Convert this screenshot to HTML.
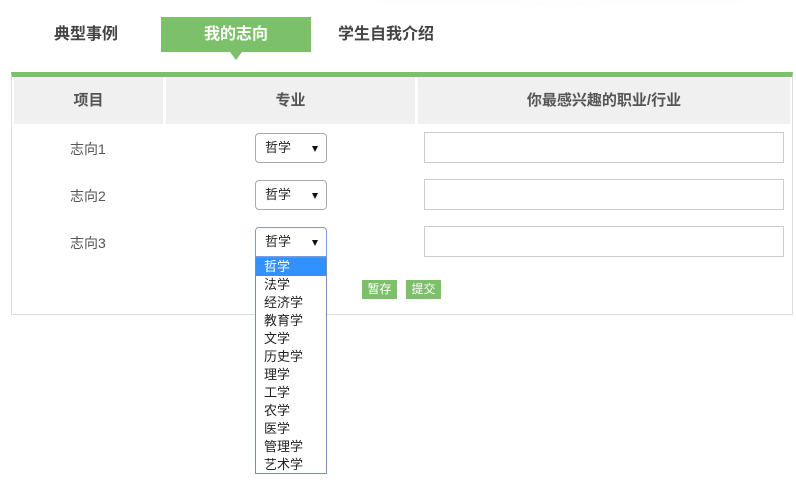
<!DOCTYPE html>
<html><head><meta charset="utf-8"><style>
*{margin:0;padding:0;box-sizing:border-box}
body{width:796px;height:490px;background:#fff;position:relative;overflow:hidden;font-family:"Liberation Sans","Noto Sans CJK SC",sans-serif;color:#555}
.a{position:absolute}
.tab{font-size:16px;font-weight:bold;color:#444;top:24px;line-height:22px}
.hd{top:77px;height:47px;background:#f0f0f0;font-size:15px;font-weight:bold;color:#555;text-align:center;line-height:47px}
.lbl{left:70px;font-size:14px;color:#555}
.sel{left:255px;width:72px;height:30px;border:1px solid #aaa;border-radius:4px;font-size:13px;color:#222;padding-left:9px;line-height:28px;background:#fff}
.sel:after{content:"";position:absolute;right:8px;top:12px;border-left:3.5px solid transparent;border-right:3.5px solid transparent;border-top:6px solid #111}
.inp{left:424px;width:360px;height:31px;border:1px solid #ccc}
.btn{top:280px;height:19px;width:35px;background:#7dc06a;color:#fff;font-size:12px;text-align:center;line-height:19px}
.dd{left:255px;top:257px;width:72px;height:217px;border:1px solid #7a8db5;background:#fff;font-size:13px;color:#222}
.dd div{height:18px;line-height:18px;padding-left:8px}
</style></head><body>
<div class="a" style="left:300px;top:-30px;width:520px;height:34px;border-radius:50%;background:radial-gradient(ellipse at center,#fff 60%,#e4e6ea 90%,#fff 100%);filter:blur(2px)"></div>
<div class="a tab" style="left:54px">典型事例</div>
<div class="a" style="left:161px;top:17px;width:150px;height:35px;background:#7dc06a"></div>
<div class="a" style="left:230px;top:52px;border-left:6px solid transparent;border-right:6px solid transparent;border-top:8px solid #7dc06a"></div>
<div class="a tab" style="left:204px;color:#fff">我的志向</div>
<div class="a tab" style="left:338px">学生自我介绍</div>
<div class="a" style="left:11px;top:72px;width:782px;height:243px;border:1px solid #ddd;border-top:5px solid #7dc06a"></div>
<div class="a hd" style="left:14px;width:149px">项目</div>
<div class="a hd" style="left:166px;width:249px">专业</div>
<div class="a hd" style="left:418px;width:372px">你最感兴趣的职业/行业</div>
<div class="a lbl" style="top:139px">志向1</div>
<div class="a lbl" style="top:186px">志向2</div>
<div class="a lbl" style="top:233px">志向3</div>
<div class="a sel" style="top:133px">哲学</div>
<div class="a sel" style="top:180px">哲学</div>
<div class="a sel" style="top:227px;border-color:#7a9be0;border-radius:4px 4px 0 0">哲学</div>
<div class="a inp" style="top:132px"></div>
<div class="a inp" style="top:179px"></div>
<div class="a inp" style="top:226px"></div>
<div class="a btn" style="left:362px">暂存</div>
<div class="a btn" style="left:406px">提交</div>
<div class="a dd">
<div style="background:#3390ff;color:#fff">哲学</div><div>法学</div><div>经济学</div><div>教育学</div><div>文学</div><div>历史学</div><div>理学</div><div>工学</div><div>农学</div><div>医学</div><div>管理学</div><div>艺术学</div>
</div>
</body></html>
